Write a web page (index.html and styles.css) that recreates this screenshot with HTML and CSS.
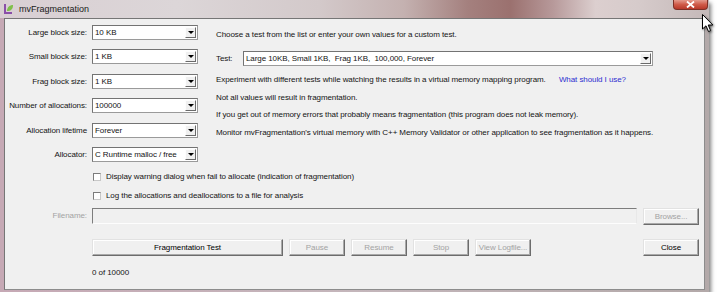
FILE: index.html
```html
<!DOCTYPE html>
<html>
<head>
    <link rel="stylesheet" href="styles.css">
</head>
<body>

<div class="window">
    <div class="titlebar">
        <svg class="app-icon" width="11" height="12" viewBox="0 0 11 12">
            <path d="M2 1 L2 10 L9 10" fill="none" stroke="#8a4fa8" stroke-width="2"/>
            <path d="M4 8 C4 4 7 2 10 2 C10 6 8 8 4 8 Z" fill="#7fc04a"/>
        </svg>
        <span class="title">mvFragmentation</span>
        <div class="close-btn">
            <svg width="9" height="7" viewBox="0 0 9 7">
                <path d="M1 0.5 L8 6.5 M8 0.5 L1 6.5" stroke="#fff" stroke-width="1.8"/>
            </svg>
        </div>
    </div>

    <div class="client">
        <div class="top">
            <div class="settings">
                <div class="field-row"><label>Large block size:</label><div class="combo"><span>10 KB</span><i class="arrow"></i></div></div>
                <div class="field-row"><label>Small block size:</label><div class="combo"><span>1 KB</span><i class="arrow"></i></div></div>
                <div class="field-row"><label>Frag block size:</label><div class="combo"><span>1 KB</span><i class="arrow"></i></div></div>
                <div class="field-row"><label>Number of allocations:</label><div class="combo"><span>100000</span><i class="arrow"></i></div></div>
                <div class="field-row"><label>Allocation lifetime</label><div class="combo"><span>Forever</span><i class="arrow"></i></div></div>
                <div class="field-row"><label>Allocator:</label><div class="combo"><span>C Runtime malloc / free</span><i class="arrow"></i></div></div>
            </div>

            <div class="info">
                <p class="choose">Choose a test from the list or enter your own values for a custom test.</p>
                <div class="test-row">
                    <label>Test:</label>
                    <div class="combo wide"><span>Large 10KB, Small 1KB,&nbsp; Frag 1KB,&nbsp; 100,000, Forever</span><i class="arrow"></i></div>
                </div>
                <p class="exp">Experiment with different tests while watching the results in a virtual memory mapping program. <a class="link">What should I use?</a></p>
                <p class="gap6">Not all values will result in fragmentation.</p>
                <p class="gap5">If you get out of memory errors that probably means fragmentation (this program does not leak memory).</p>
                <p class="gap6">Monitor mvFragmentation's virtual memory with C++ Memory Validator or other application to see fragmentation as it happens.</p>
            </div>
        </div>

        <div class="checks">
            <div class="check"><span class="box"></span>Display warning dialog when fail to allocate (indication of fragmentation)</div>
            <div class="check"><span class="box"></span>Log the allocations and deallocations to a file for analysis</div>
        </div>

        <div class="file-row">
            <label class="off">Filename:</label>
            <div class="edit"></div>
            <button class="btn" disabled>Browse...</button>
        </div>

        <div class="buttons">
            <button class="btn main">Fragmentation Test</button>
            <button class="btn" disabled>Pause</button>
            <button class="btn" disabled>Resume</button>
            <button class="btn" disabled>Stop</button>
            <button class="btn" disabled>View Logfile...</button>
            <button class="btn close">Close</button>
        </div>

        <div class="status">0 of 10000</div>
    </div>
</div>

<svg class="cursor" width="12" height="19" viewBox="0 0 12 19">
    <path d="M0.5 0.5 L0.5 15 L4 11.8 L6.5 17.5 L8.6 16.6 L6.2 11 L10.8 11 Z" fill="#fff" stroke="#000" stroke-width="1"/>
</svg>

</body>
</html>
```

FILE: styles.css
```css
body {
    margin: 0;
    background: #fff;
    font-family: "Liberation Sans", Arial, sans-serif;
    font-size: 8px;
    letter-spacing: -0.08px;
    color: #141414;
}

.window {
    position: relative;
    width: 709px;
    background: linear-gradient(90deg, #c6a9b5, #c4b6bb 50%, #b3a9a9);
    box-shadow: 2px 3px 4px rgba(0, 0, 0, 0.5);
    padding-bottom: 2px;
}

.titlebar {
    height: 18px;
    display: flex;
    align-items: center;
    background: linear-gradient(90deg, #d9cfd3 0%, #dcd6d8 25%, #d3c9ca 45%, #c4b1b0 57%, #a4807e 66%, #9b716f 72%, #b7999a 78%, #dccfcf 84%, #d6cbcb 90%, #c4b8b8 100%);
}

.app-icon {
    margin-left: 3px;
}

.title {
    margin-left: 5px;
    font-size: 9px;
    letter-spacing: 0;
    color: #202020;
}

.close-btn {
    margin-left: auto;
    margin-right: 1px;
    align-self: flex-start;
    width: 35px;
    height: 10px;
    box-sizing: border-box;
    background: linear-gradient(#e49a8c, #cf5a48 50%, #b8392a);
    border: 1px solid #7e3026;
    border-top: none;
    border-radius: 0 0 4px 4px;
    display: flex;
    justify-content: center;
    align-items: center;
}

.client {
    margin: 0 4px 0 4px;
    height: 272px;
    box-sizing: border-box;
    background: #f0f0f0;
    border: 1px solid;
    border-color: #767676 #8c8c8c #8c8c8c #767676;
    padding: 6px 5px 0 0;
}

.top {
    display: flex;
}

.settings {
    display: flex;
    flex-direction: column;
    gap: 9.4px;
}

.field-row {
    display: flex;
    align-items: center;
    height: 15px;
}

.field-row label {
    width: 82px;
    margin-right: 5px;
    text-align: right;
    white-space: nowrap;
}

.combo {
    width: 106px;
    height: 15px;
    box-sizing: border-box;
    display: flex;
    align-items: center;
    padding-left: 2px;
    background: #fff;
    border: 1px solid;
    border-color: #737373 #9a9a9a #9a9a9a #737373;
    white-space: nowrap;
}

.combo.wide {
    width: 410px;
}

.arrow {
    margin-left: auto;
    margin-right: 1px;
    width: 11px;
    height: 11px;
    box-sizing: border-box;
    display: flex;
    justify-content: center;
    align-items: center;
    background: #f0f0f0;
    border: 1px solid;
    border-color: #fdfdfd #6a6a6a #6a6a6a #fdfdfd;
}

.arrow::after {
    content: "";
    border-left: 3px solid transparent;
    border-right: 3px solid transparent;
    border-top: 3px solid #000;
}

.info {
    margin-left: 18px;
}

.info p {
    margin: 0;
    line-height: 12px;
    white-space: nowrap;
}

.info .choose {
    margin-top: 4px;
}

.test-row {
    display: flex;
    align-items: center;
    height: 15px;
    margin-top: 9.5px;
}

.test-row label {
    width: 27px;
}

.info .exp {
    margin-top: 8.5px;
}

.info .gap6 {
    margin-top: 6px;
}

.info .gap5 {
    margin-top: 5px;
}

.link {
    margin-left: 11px;
    color: #2e2ed0;
}

.checks {
    display: flex;
    flex-direction: column;
    gap: 7px;
    margin-top: 9px;
    padding-left: 87px;
}

.check {
    display: flex;
    align-items: center;
    height: 12px;
}

.box {
    width: 8px;
    height: 8px;
    box-sizing: border-box;
    margin: 0 5px 0 1px;
    background: #fff;
    border: 1px solid;
    border-color: #7c7c7c #c8c8c8 #c8c8c8 #7c7c7c;
}

.file-row {
    display: flex;
    align-items: flex-start;
    margin-top: 6px;
}

.file-row label {
    width: 82px;
    margin-right: 5px;
    text-align: right;
    line-height: 16px;
}

.off {
    color: #a3a3a3;
}

.edit {
    width: 545px;
    height: 16px;
    box-sizing: border-box;
    background: #f0f0f0;
    border: 1px solid;
    border-color: #7d7d7d #e8e8e8 #fdfdfd #7d7d7d;
}

.btn {
    width: 56px;
    height: 17px;
    box-sizing: border-box;
    padding: 0;
    font: inherit;
    letter-spacing: inherit;
    color: #000;
    background: #f0f0f0;
    border: 1px solid;
    border-color: #e2e2e2 #6c6c6c #6c6c6c #e2e2e2;
    box-shadow: inset -1px -1px #a9a9a9, inset 1px 1px #fff;
}

.btn:disabled {
    color: #a3a3a3;
}

.file-row .btn {
    margin-left: 6px;
}

.buttons {
    display: flex;
    gap: 6px;
    margin-top: 14px;
    padding-left: 87px;
}

.btn.main {
    width: 191px;
}

.btn.close {
    margin-left: auto;
}

.status {
    margin-top: 11px;
    padding-left: 87px;
    line-height: 12px;
}

.cursor {
    position: absolute;
    left: 702px;
    top: 14px;
    filter: drop-shadow(1px 1px 1px rgba(0, 0, 0, 0.5));
}
```
